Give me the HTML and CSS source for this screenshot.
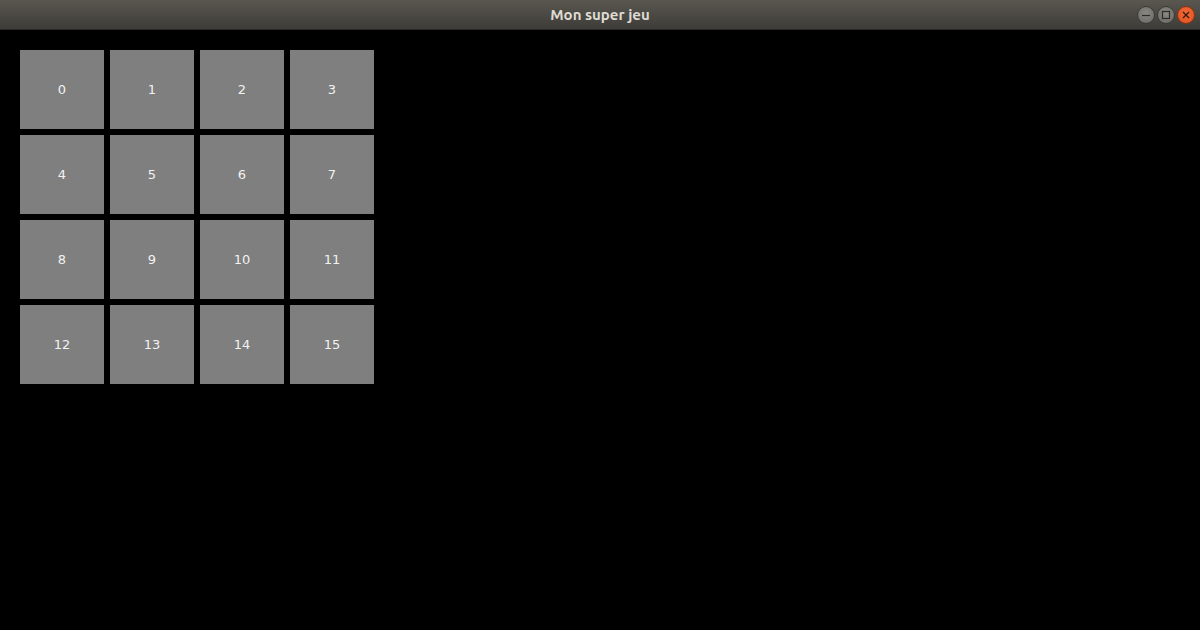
FILE: index.html
```html
<!DOCTYPE html>
<html lang="fr">
<head>
  <meta charset="UTF-8" />
  <title>Mon super jeu</title>
  <link rel="stylesheet" href="styles.css">
</head>
<body>
  <header class="titlebar">
    <span class="title">Mon super jeu</span>
    <div class="controls">
      <span class="btn">
        <svg width="10" height="10" viewBox="0 0 10 10"><path d="M1 5.5h8" stroke="#2d2c29" stroke-width="1.2"/></svg>
      </span>
      <span class="btn">
        <svg width="10" height="10" viewBox="0 0 10 10"><rect x="1.5" y="1.5" width="7" height="7" fill="none" stroke="#2d2c29" stroke-width="1.2"/></svg>
      </span>
      <span class="btn close">
        <svg width="10" height="10" viewBox="0 0 10 10"><path d="M2 2l6 6M8 2l-6 6" stroke="#3b1a0c" stroke-width="1.4"/></svg>
      </span>
    </div>
  </header>

  <main class="board">
    <div class="tile">0</div>
    <div class="tile">1</div>
    <div class="tile">2</div>
    <div class="tile">3</div>
    <div class="tile">4</div>
    <div class="tile">5</div>
    <div class="tile">6</div>
    <div class="tile">7</div>
    <div class="tile">8</div>
    <div class="tile">9</div>
    <div class="tile">10</div>
    <div class="tile">11</div>
    <div class="tile">12</div>
    <div class="tile">13</div>
    <div class="tile">14</div>
    <div class="tile">15</div>
  </main>
</body>
</html>
```

FILE: styles.css
```css
html, body {
  margin: 0;
  height: 100%;
  background: #000;
  font-family: 'DejaVu Sans', sans-serif;
}

.titlebar {
  height: 30px;
  box-sizing: border-box;
  border-bottom: 1px solid #2b2a27;
  background: linear-gradient(#5a5750, #3d3c38);
  display: flex;
  align-items: center;
  justify-content: center;
  position: relative;
}

.title {
  color: #dfdbd2;
  font-family: 'Ubuntu', 'DejaVu Sans', sans-serif;
  font-weight: bold;
  font-size: 15px;
}

.controls {
  position: absolute;
  right: 5px;
  top: 6px;
  display: flex;
  gap: 2px;
}

.btn {
  width: 18px;
  height: 18px;
  border-radius: 50%;
  background: radial-gradient(circle at 50% 40%, #8a8883, #6a6864);
  border: 1px solid #3a3935;
  box-sizing: border-box;
  display: flex;
  align-items: center;
  justify-content: center;
}

.btn.close {
  background: radial-gradient(circle at 50% 40%, #f26b3a, #e0501c);
  border-color: #8a3210;
}

.board {
  display: grid;
  grid-template-columns: repeat(4, 84px);
  grid-auto-rows: 79px;
  gap: 6px;
  padding: 20px;
}

.tile {
  background: #7f7f7f;
  color: #f2f2f2;
  font-size: 13px;
  display: flex;
  align-items: center;
  justify-content: center;
}
```
